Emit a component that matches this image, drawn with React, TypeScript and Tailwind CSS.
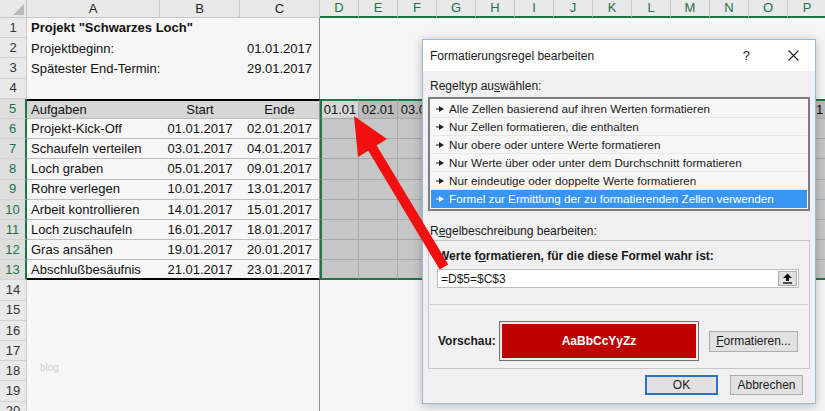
import React from 'react';

const COLS = ['D', 'E', 'F', 'G', 'H', 'I', 'J', 'K', 'L', 'M', 'N', 'O', 'P'];

const tasks: [string, string, string][] = [
  ['Projekt-Kick-Off', '01.01.2017', '02.01.2017'],
  ['Schaufeln verteilen', '03.01.2017', '04.01.2017'],
  ['Loch graben', '05.01.2017', '09.01.2017'],
  ['Rohre verlegen', '10.01.2017', '13.01.2017'],
  ['Arbeit kontrollieren', '14.01.2017', '15.01.2017'],
  ['Loch zuschaufeln', '16.01.2017', '18.01.2017'],
  ['Gras ansähen', '19.01.2017', '20.01.2017'],
  ['Abschlußbesäufnis', '21.01.2017', '23.01.2017'],
];

const ruleTypes = [
  'Alle Zellen basierend auf ihren Werten formatieren',
  'Nur Zellen formatieren, die enthalten',
  'Nur obere oder untere Werte formatieren',
  'Nur Werte über oder unter dem Durchschnitt formatieren',
  'Nur eindeutige oder doppelte Werte formatieren',
  'Formel zur Ermittlung der zu formatierenden Zellen verwenden',
];

// date cells of row 5 that are not hidden behind the dialog
const visibleDates = [0, 1, 2, 12];

const HeaderRow = () => (
  <div className="flex h-[18px] shrink-0">
    <div className="w-[27px] shrink-0 bg-[#e9e9e9] border-r border-r-[#c8c8c8] border-b border-b-[#c8c8c8] flex items-end justify-end pr-[2px] pb-[2px]">
      <svg width="11" height="11" viewBox="0 0 11 11">
        <polygon points="11,0 11,11 0,11" fill="#b9b9b9" />
      </svg>
    </div>
    {['A', 'B', 'C'].map((c, i) => (
      <div
        key={c}
        className={`${i === 0 ? 'w-[133px]' : 'w-[80px]'} shrink-0 bg-[#e9e9e9] border-r border-r-[#c8c8c8] border-b border-b-[#c8c8c8] flex items-center justify-center text-[13px] text-[#222]`}
      >
        {c}
      </div>
    ))}
    {COLS.map((c) => (
      <div
        key={c}
        className="w-[39px] shrink-0 bg-[#e9e9e9] border-r border-r-[#c8c8c8] border-b-2 border-b-[#217346] flex items-center justify-center text-[13px] text-[#217346]"
      >
        {c}
      </div>
    ))}
  </div>
);

const SheetRow = ({ n }: { n: number }) => {
  const inSel = n >= 5 && n <= 13;
  const task = n >= 6 && n <= 13 ? tasks[n - 6] : null;

  let a: React.ReactNode = '';
  let b = '';
  let c = '';
  if (n === 1) a = <span className="font-bold">Projekt "Schwarzes Loch"</span>;
  if (n === 2) { a = 'Projektbeginn:'; c = '01.01.2017'; }
  if (n === 3) { a = 'Spätester End-Termin:'; c = '29.01.2017'; }
  if (n === 5) { a = 'Aufgaben'; b = 'Start'; c = 'Ende'; }
  if (task) { a = task[0]; b = task[1]; c = task[2]; }

  // table A5:C13 borders
  let tbl = '';
  if (n === 5) tbl = 'bg-[#d6d6d6] border-t-2 border-t-black border-b border-b-[#bdbdbd]';
  else if (n === 13) tbl = 'border-b-2 border-b-black';
  else if (inSel) tbl = 'border-b border-b-[#bdbdbd]';

  return (
    <div className="flex h-[20.2px] shrink-0 text-[13px] text-[#111]">
      <div
        className={`w-[27px] shrink-0 flex items-center justify-center border-b border-b-[#d0d0d0] ${
          inSel ? 'bg-[#dedede] text-[#217346] border-r-2 border-r-[#217346]' : 'bg-[#e9e9e9] text-[#333] border-r border-r-[#c8c8c8]'
        }`}
      >
        {n}
      </div>
      <div className={`w-[133px] shrink-0 flex items-center pl-[4px] whitespace-nowrap ${tbl}`}>{a}</div>
      <div className={`w-[80px] shrink-0 flex items-center justify-center whitespace-nowrap ${tbl}`}>{b}</div>
      <div className={`w-[80px] shrink-0 flex items-center justify-center whitespace-nowrap border-r border-r-[#8e8e8e] ${tbl}`}>{c}</div>
      {COLS.map((col, i) => {
        if (!inSel) return <div key={col} className="w-[39px] shrink-0" />;
        let cls = 'w-[39px] shrink-0 flex items-center justify-center overflow-hidden whitespace-nowrap border-r border-r-[#a8a8a8]';
        if (i === 0) cls += ' border-l-2 border-l-[#217346]';
        if (n === 5) cls += ` border-t-2 border-t-[#217346] border-b border-b-[#a8a8a8] ${i === 0 ? 'bg-[#d6d6d6]' : 'bg-[#bcbcbc]'}`;
        else if (n === 13) cls += ' bg-[#c6c6c6] border-b-2 border-b-[#217346]';
        else cls += ' bg-[#c6c6c6] border-b border-b-[#a8a8a8]';
        return (
          <div key={col} className={cls}>
            {n === 5 && visibleDates.includes(i) ? `${String(i + 1).padStart(2, '0')}.01` : ''}
          </div>
        );
      })}
    </div>
  );
};

const UploadIcon = () => (
  <svg width="11" height="11" viewBox="0 0 11 11">
    <polygon points="5.5,0.5 10,5 7,5 7,8 4,8 4,5 1,5" fill="#111" />
    <rect x="1" y="9.3" width="9" height="1.4" fill="#111" />
  </svg>
);

const Dialog = () => (
  <div className="absolute left-[422px] top-[39px] w-[394px] h-[365px] border border-[#9bb8d8] bg-[#f0f0f0] shadow-[0_2px_10px_rgba(0,0,0,0.25)] flex flex-col text-[12px] text-[#1a1a1a]">
    <div className="h-[31px] shrink-0 bg-white flex items-center pl-[7px] pr-[16px]">
      <span className="flex-1">Formatierungsregel bearbeiten</span>
      <span className="mr-[38px] text-[13px]">?</span>
      <svg width="11" height="11" viewBox="0 0 11 11">
        <path d="M0.5 0.5 L10.5 10.5 M10.5 0.5 L0.5 10.5" stroke="#222" strokeWidth="1.1" />
      </svg>
    </div>

    <div className="px-[5px] flex flex-col">
      <div className="pt-[8px] leading-[14px] mb-[4px] pl-[2px]">
        Regeltyp au<span className="underline">s</span>wählen:
      </div>
      <div className="border-2 border-[#7d7d7d] bg-[#f7f7f7] p-[1px] flex flex-col">
        {ruleTypes.map((t, i) => {
          const sel = i === ruleTypes.length - 1;
          return (
            <div
              key={t}
              className={`h-[18px] flex items-center gap-[5px] pl-[5px] text-[11.7px] whitespace-nowrap ${
                sel ? 'bg-[#3896f2] text-white' : 'border-b border-b-[#e6e6e6]'
              }`}
            >
              <svg width="8" height="6" viewBox="0 0 8 6">
                <polygon points="0,2.4 3,2.4 3,0 8,3 3,6 3,3.6 0,3.6" fill={sel ? '#ffffff' : '#222'} />
              </svg>
              <span>{t}</span>
            </div>
          );
        })}
      </div>

      <div className="pt-[13px] leading-[14px] mb-[2px] pl-[2px]">
        R<span className="underline">e</span>gelbeschreibung bearbeiten:
      </div>
      <div className="h-[129px] border border-[#c6c6c6] flex flex-col">
        <div className="px-[8px]">
          <div className="pt-[8px] leading-[14px] font-bold pl-[1px]">
            Werte f<span className="underline">o</span>rmatieren, für die diese Formel wahr ist:
          </div>
          <div className="mt-[6px] h-[19px] mr-[2px] bg-white border border-[#bdbdbd] flex items-center pl-[3px] pr-[1px]">
            <span className="flex-1">=D$5=$C$3</span>
            <div className="w-[19px] h-[15px] bg-[#e1e1e1] border border-[#adadad] flex items-center justify-center">
              <UploadIcon />
            </div>
          </div>
        </div>
        <div className="mt-[16px] h-px bg-[#cfcfcf] mx-[1px]" />
        <div className="mt-[16px] flex items-center px-[9px]">
          <div className="w-[61px] font-bold">Vorschau:</div>
          <div className="w-[200px] h-[40px] border border-[#6f6f6f] bg-[#ececec] p-[2px]">
            <div className="h-full bg-[#c00000] flex items-center justify-center text-white font-bold">AaBbCcYyZz</div>
          </div>
          <div className="ml-[10px] w-[89px] h-[21px] bg-[#e1e1e1] border border-[#adadad] flex items-center justify-center">
            <span className="underline">F</span>ormatieren...
          </div>
        </div>
      </div>
    </div>

    <div className="flex justify-end gap-[12px] pr-[12px] mt-[6px]">
      <div className="w-[73px] h-[20px] bg-[#e1e1e1] border-2 border-[#2a74c8] flex items-center justify-center">OK</div>
      <div className="w-[73px] h-[20px] bg-[#e1e1e1] border border-[#adadad] flex items-center justify-center">Abbrechen</div>
    </div>
  </div>
);

const Arrow = () => (
  <svg className="absolute inset-0 pointer-events-none" width="825" height="411" viewBox="0 0 825 411">
    <line x1="444" y1="267" x2="370" y2="144" stroke="#f20f0f" strokeWidth="10" />
    <polygon points="354,116 387,139 358,157" fill="#f20f0f" />
  </svg>
);

export default function App() {
  return (
    <div className="relative w-[825px] h-[411px] overflow-hidden bg-[#f6f6f6] font-['Liberation_Sans',Arial,sans-serif]">
      <div className="flex flex-col">
        <HeaderRow />
        {Array.from({ length: 20 }).map((_, i) => (
          <SheetRow key={i} n={i + 1} />
        ))}
      </div>
      <div className="absolute left-[40px] top-[360px] text-[10px] text-[#cfcfcf]">blog</div>
      <Dialog />
      <Arrow />
    </div>
  );
}
